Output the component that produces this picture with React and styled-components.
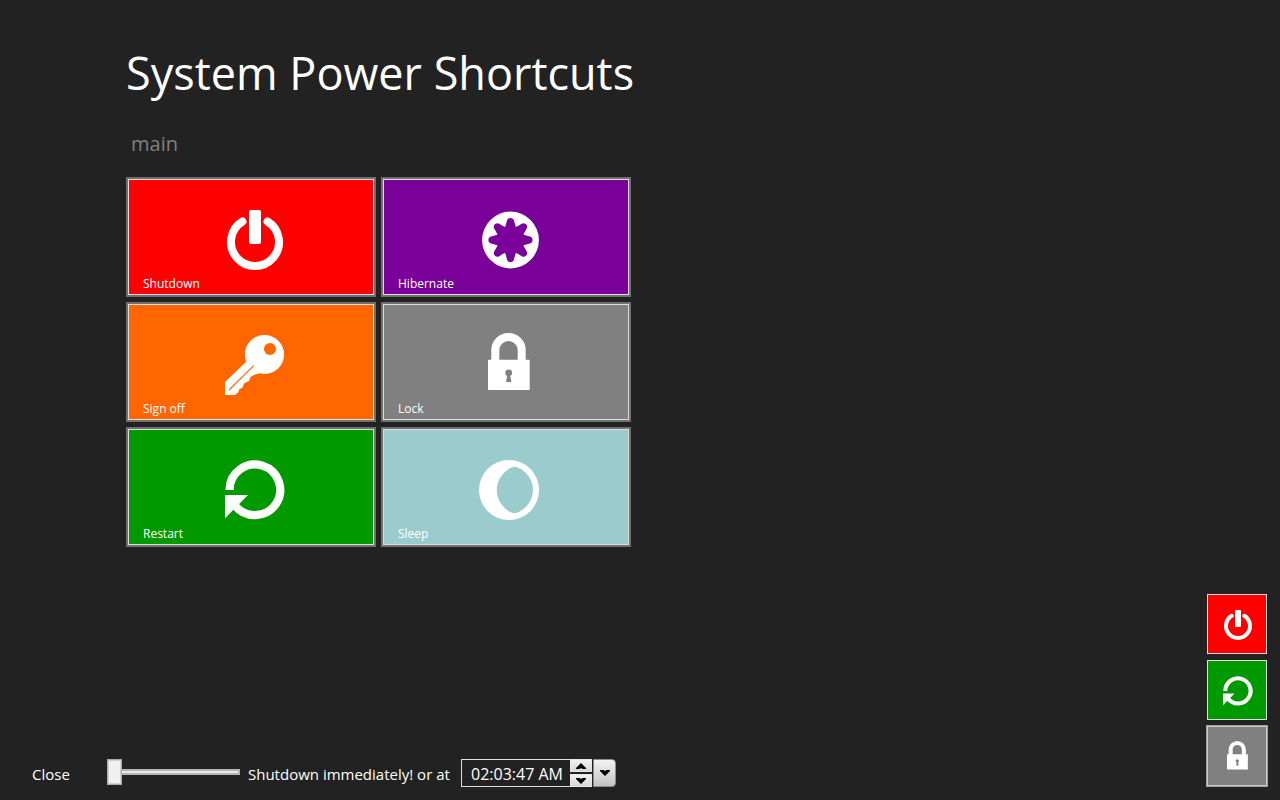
import React, { useState } from "react";
import styled, { createGlobalStyle } from "styled-components";

const GlobalStyle = createGlobalStyle`
  body {
    margin: 0;
    background: #222;
  }
  * {
    box-sizing: border-box;
  }
`;

// Styled components
const Page = styled.div`
  display: flex;
  min-height: 100vh;
  padding: 42px 12px 13px 32px;
  background: #222;
  color: #fff;
  font-family: "Segoe UI", "Open Sans", "Noto Sans", sans-serif;
`;

const Content = styled.div`
  flex: 1;
  display: flex;
  flex-direction: column;
  justify-content: space-between;
`;

const Main = styled.main`
  padding-left: 94px;
`;

const Title = styled.h1`
  margin: 0;
  font-size: 45px;
  font-weight: 400;
  line-height: 62px;
`;

const GroupTitle = styled.h2`
  margin: 26px 0 20px 5px;
  font-size: 20px;
  font-weight: 400;
  line-height: 27px;
  color: #808080;
`;

const TileGrid = styled.div`
  display: grid;
  grid-template-columns: repeat(2, 250px);
  gap: 5px;
`;

const Tile = styled.button`
  display: flex;
  flex-direction: column;
  align-items: center;
  height: 120px;
  padding: 31px 0 0 8px;
  border: 2px solid #707070;
  box-shadow: inset 0 0 0 1px #dedede;
  background: ${(props) => props.$color};
  color: #fff;
  font-family: inherit;
  font-size: 12px;
  line-height: 18px;
  cursor: pointer;
`;

const TileLabel = styled.span`
  align-self: flex-start;
  margin: 5px 0 0 7px;
`;

const Icon = styled.svg`
  display: block;
  flex: none;
  width: ${(props) => props.$size}px;
  height: ${(props) => props.$size}px;
  overflow: visible;
  fill: #fff;
  color: ${(props) => props.$hole};
`;

const Sidebar = styled.nav`
  display: flex;
  flex-direction: column;
  align-self: flex-end;
  gap: 6px;
  padding: 0 1px 1px 0;
`;

const SideButton = styled.button`
  display: flex;
  align-items: center;
  justify-content: center;
  width: 60px;
  height: 60px;
  padding: 2px 0 0 2px;
  border: 1px solid ${(props) => (props.$active ? "#c8c8c8" : "#dedede")};
  box-shadow: ${(props) => (props.$active ? "0 0 0 1px #a0a0a0" : "none")};
  background: ${(props) => props.$color};
  cursor: pointer;
`;

const Footer = styled.footer`
  display: flex;
  align-items: center;
  height: 28px;
  font-size: 15px;
  line-height: 20px;
`;

const CloseButton = styled.button`
  width: 75px;
  padding: 2px 0 0;
  border: none;
  background: none;
  color: #fff;
  font: inherit;
  text-align: left;
  cursor: pointer;
`;

const Slider = styled.input`
  appearance: none;
  width: 133px;
  height: 26px;
  margin: 0 8px 2px 0;
  background: none;

  &::-webkit-slider-runnable-track {
    height: 6px;
    border: 2px solid #b4b6b6;
    background: #e7eaea;
  }

  &::-webkit-slider-thumb {
    appearance: none;
    width: 15px;
    height: 26px;
    margin: -12px 0 0 -2px;
    border: 1px solid #acacac;
    border-radius: 0;
    box-shadow: inset 0 0 0 1px #d0d0d0;
    background: #f0f0f0;
  }
`;

const SliderLabel = styled.label`
  width: 213px;
  padding-top: 2px;
  white-space: nowrap;
`;

const TimeInput = styled.input`
  width: 109px;
  height: 28px;
  padding: 2px 0 0 9px;
  border: 1px solid #d5dfe5;
  border-right: none;
  border-radius: 0;
  background: #222;
  color: #fff;
  font: inherit;
  font-size: 16px;
`;

const Spinner = styled.div`
  display: flex;
  flex-direction: column;
  gap: 2px;
  margin-right: 1px;
`;

const ControlButton = styled.button`
  display: flex;
  align-items: center;
  justify-content: center;
  width: ${(props) => (props.$tall ? 23 : 22)}px;
  height: ${(props) => (props.$tall ? 28 : 13)}px;
  padding: 0;
  border: 1px solid ${(props) => (props.$tall ? "#8e8e8e" : "#e8e8e8")};
  border-radius: ${(props) => (props.$tall ? "0 4px 4px 0" : "0")};
  background: linear-gradient(#f3f3f3, ${(props) => (props.$tall ? "#c4c4c4" : "#d6d6d6")});
`;

const PowerShape = () => (
  <>
    <path d="M17.5 11.5A24 24 0 1 0 42.5 11.5" fill="none" stroke="#fff" strokeWidth="8" strokeLinecap="round" />
    <rect x="24" y="0" width="12" height="34" rx="2" />
  </>
);

const HibernateShape = () => (
  <>
    <circle cx="30.5" cy="30" r="28.4" />
    <g transform="translate(30.5 30)" fill="currentColor">
      <circle r="13.6" />
      {[0, 45, 90, 135, 180, 225, 270, 315].map((angle) => (
        <path
          key={angle}
          transform={`rotate(${angle})`}
          d="M-5.8 -12C-4.6 -14.6 -4.2 -17 -3.5 -19.4C-2.8 -23 2.8 -23 3.5 -19.4C4.2 -17 4.6 -14.6 5.8 -12Z"
        />
      ))}
    </g>
  </>
);

const KeyShape = () => (
  <>
    <path d="M24 24L0 47V60H10L13.5 57L14 54.5L17.5 52.5L19 48.5L24 46L25.5 42L30 39.5L34 38.5L40 28Z" />
    <circle cx="39.5" cy="19.5" r="19.6" />
    <circle cx="45" cy="14" r="6" fill="currentColor" />
    <path d="M4 55L28.7 30.7" stroke="currentColor" strokeWidth="1.1" />
  </>
);

const LockShape = () => (
  <>
    <path d="M15.3 26V15.2A13.2 13.2 0 0 1 41.7 15.2V26" fill="none" stroke="#fff" strokeWidth="8" />
    <rect x="8" y="24.7" width="41.7" height="30.3" rx="0.7" />
    <circle cx="28.7" cy="37.8" r="3.4" fill="currentColor" />
    <path d="M27.6 39H29.8L31.4 47H26Z" fill="currentColor" />
  </>
);

const RestartShape = () => (
  <>
    <path d="M4.6 30A25.3 25.3 0 1 1 9.8 45.2" fill="none" stroke="#fff" strokeWidth="8.2" />
    <path d="M0 35H23L0 58.3Z" />
  </>
);

const SleepShape = () => (
  <>
    <circle cx="29" cy="30" r="30" />
    <path d="M34.5 6.8C28 7.2 16.8 16.5 16.8 30C16.8 43.5 28 52.8 34.5 53.2C41 52.8 53 43.5 53 30C53 16.5 41 7.2 34.5 6.8Z" fill="currentColor" />
  </>
);

const tiles = [
  { label: "Shutdown", color: "#ff0000", Shape: PowerShape },
  { label: "Hibernate", color: "#790099", Shape: HibernateShape },
  { label: "Sign off", color: "#ff6600", Shape: KeyShape },
  { label: "Lock", color: "#808080", Shape: LockShape },
  { label: "Restart", color: "#009900", Shape: RestartShape },
  { label: "Sleep", color: "#9acccd", Shape: SleepShape },
];

const sideItems = [tiles[0], tiles[4], tiles[3]];

const Arrow = ({ up }) => (
  <svg width="10" height="6" viewBox="0 0 10 6" aria-hidden="true">
    <path d={up ? "M5 0L10 5V6H6.5L5 5L3.5 6H0V5Z" : "M5 6L10 1V0H6.5L5 1L3.5 0H0V1Z"} fill="#000" />
  </svg>
);

const App = () => {
  const [delay, setDelay] = useState(0);
  const [time, setTime] = useState("02:03:47 AM");

  return (
    <Page>
      <GlobalStyle />
      <Content>
        <Main>
          <Title>System Power Shortcuts</Title>
          <GroupTitle>main</GroupTitle>
          <TileGrid>
            {tiles.map(({ label, color, Shape }) => (
              <Tile key={label} type="button" $color={color}>
                <Icon viewBox="0 0 60 60" $size={60} $hole={color} aria-hidden="true">
                  <Shape />
                </Icon>
                <TileLabel>{label}</TileLabel>
              </Tile>
            ))}
          </TileGrid>
        </Main>
        <Footer>
          <CloseButton type="button">Close</CloseButton>
          <Slider
            id="delay"
            type="range"
            min="0"
            max="120"
            value={delay}
            onChange={(e) => setDelay(Number(e.target.value))}
          />
          <SliderLabel htmlFor="delay">Shutdown immediately! or at</SliderLabel>
          <TimeInput
            type="text"
            aria-label="Shutdown time"
            value={time}
            onChange={(e) => setTime(e.target.value)}
          />
          <Spinner>
            <ControlButton type="button" aria-label="Later"><Arrow up /></ControlButton>
            <ControlButton type="button" aria-label="Earlier"><Arrow /></ControlButton>
          </Spinner>
          <ControlButton type="button" $tall aria-label="Choose time"><Arrow /></ControlButton>
        </Footer>
      </Content>
      <Sidebar>
        {sideItems.map(({ label, color, Shape }) => (
          <SideButton key={label} type="button" aria-label={label} $color={color} $active={label === "Lock"}>
            <Icon viewBox="0 0 60 60" $size={30} $hole={color} aria-hidden="true">
              <Shape />
            </Icon>
          </SideButton>
        ))}
      </Sidebar>
    </Page>
  );
};

export default App;
